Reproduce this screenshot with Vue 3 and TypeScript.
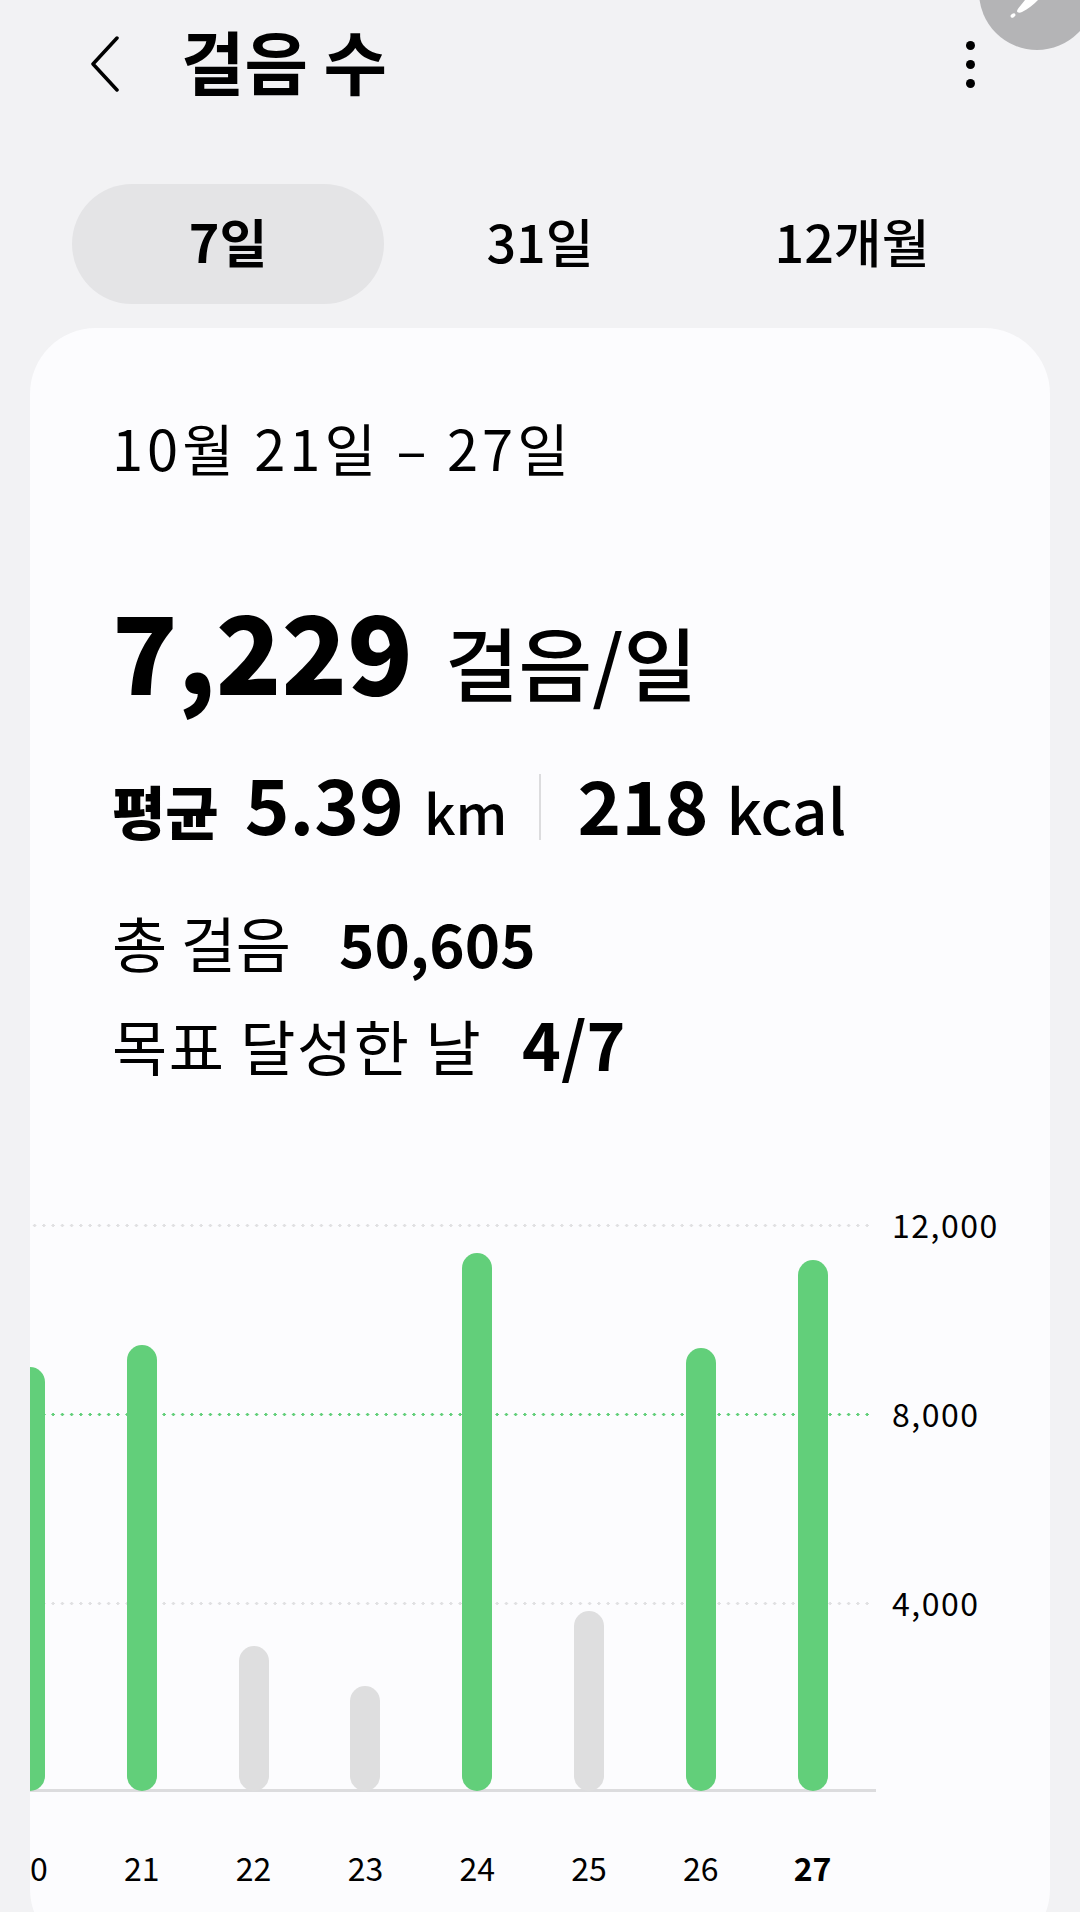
<template>
  <div class="screen">
    <div class="fab">
      <svg width="116" height="58" viewBox="0 0 116 58">
        <path d="M46 0 C43 4 39 8 38 11 C38 13 41 13 43 12 C49 9 55 4 59 0 Z" fill="#fff" />
        <ellipse cx="34" cy="15.5" rx="2.8" ry="1.8" transform="rotate(-35 34 15.5)" fill="#fff" />
      </svg>
    </div>

    <header class="topbar">
      <svg class="back" width="28" height="56" viewBox="0 0 28 56">
        <path d="M26 2 L2 28 L26 54" fill="none" stroke="#000" stroke-width="3.5" stroke-linecap="round" stroke-linejoin="round" />
      </svg>
      <h1 class="title">걸음 수</h1>
      <div class="kebab"><i></i><i></i><i></i></div>
    </header>

    <nav class="tabs">
      <div v-for="t in tabs" :key="t" class="tab" :class="{ active: t === '7일' }">{{ t }}</div>
    </nav>

    <main class="card">
      <div class="range">10월 21일 – 27일</div>

      <div class="avg">
        <span class="avg-num">7,229</span>
        <span class="avg-unit">걸음/일</span>
      </div>

      <div class="stats">
        <span class="stats-label">평균</span>
        <span class="stats-num km-num">5.39</span>
        <span class="stats-unit km">km</span>
        <span class="divider"></span>
        <span class="stats-num">218</span>
        <span class="stats-unit kcal">kcal</span>
      </div>

      <div class="row first">
        <span class="row-label">총 걸음</span>
        <span class="row-value">50,605</span>
      </div>
      <div class="row second">
        <span class="row-label">목표 달성한 날</span>
        <span class="row-value">4/7</span>
      </div>

      <section class="chart">
        <div class="plot">
          <div v-for="g in gridLines" :key="g.label" class="grid-row" :class="{ short: g.label === '4,000' }">
            <span class="dots" :class="{ goal: g.goal }"></span>
            <span class="grid-label">{{ g.label }}</span>
          </div>
          <div class="axis"></div>
          <div class="bars">
            <div v-for="d in days" :key="d.day" class="bar-col">
              <div class="bar" :class="{ hit: d.hit }" :style="{ height: barHeight(d.top) + 'px' }"></div>
            </div>
          </div>
        </div>
        <div class="day-row">
          <span v-for="d in days" :key="d.day" class="day" :class="{ today: d.day === 27 }">{{ d.day }}</span>
        </div>
      </section>
    </main>
  </div>
</template>

<script setup lang="ts">
interface Day {
  day: number
  top: number
  hit: boolean
}

const tabs: string[] = ['7일', '31일', '12개월']

const gridLines = [
  { label: '12,000', goal: false },
  { label: '8,000', goal: true },
  { label: '4,000', goal: false }
]

// top = y of the bar's top edge on the screen
const days: Day[] = [
  { day: 20, top: 1367, hit: true },
  { day: 21, top: 1345, hit: true },
  { day: 22, top: 1646, hit: false },
  { day: 23, top: 1686, hit: false },
  { day: 24, top: 1253, hit: true },
  { day: 25, top: 1611, hit: false },
  { day: 26, top: 1348, hit: true },
  { day: 27, top: 1260, hit: true }
]

const AXIS_Y = 1791

const barHeight = (top: number): number => AXIS_Y - top
</script>

<style>
html,
body {
  margin: 0;
  background: #f2f2f4;
}
</style>

<style scoped>
.screen {
  position: relative;
  width: 1080px;
  height: 1912px;
  overflow: hidden;
  background: #f2f2f4;
  color: #000;
  font-family: "Noto Sans CJK KR", "Noto Sans", sans-serif;
}

.fab {
  position: absolute;
  left: 979px;
  top: -8px;
  width: 116px;
  height: 58px;
  border-radius: 0 0 58px 58px;
  background: #b4b4b6;
}

.fab svg {
  display: block;
  margin-top: 8px;
}

.topbar {
  display: flex;
  align-items: center;
  height: 128px;
  padding-left: 91px;
  box-sizing: border-box;
}

.back {
  flex: none;
}

.title {
  margin: 0 0 8px 62px;
  font-size: 69px;
  line-height: 80px;
  font-weight: 700;
}

.kebab {
  display: flex;
  flex-direction: column;
  gap: 10px;
  margin-left: auto;
  margin-right: 105px;
}

.kebab i {
  display: block;
  width: 9px;
  height: 9px;
  border-radius: 50%;
  background: #000;
}

.tabs {
  display: flex;
  padding: 56px 72px 0;
}

.tab {
  flex: 1;
  height: 120px;
  border-radius: 60px;
  font-size: 52px;
  line-height: 113px;
  font-weight: 500;
  text-align: center;
}

.tab.active {
  background: #e4e4e6;
  font-weight: 700;
}

.card {
  position: relative;
  height: 1627px;
  margin: 24px 30px 0;
  padding-top: 87px;
  box-sizing: border-box;
  overflow: hidden;
  border-radius: 66px;
  background: #fcfcfe;
}

.range {
  padding-left: 82px;
  font-size: 56px;
  line-height: 64px;
  letter-spacing: 4px;
}

.avg {
  display: flex;
  align-items: baseline;
  gap: 32px;
  margin-top: 104px;
  padding-left: 82px;
  line-height: 130px;
}

.avg-num {
  font-size: 108px;
  font-weight: 900;
}

.avg-unit {
  font-size: 80px;
  font-weight: 500;
}

.stats {
  display: flex;
  align-items: baseline;
  margin-top: 32px;
  padding-left: 82px;
  line-height: 90px;
}

.stats-label {
  font-size: 58px;
  font-weight: 900;
  margin-right: 26px;
}

.stats-num {
  font-size: 74px;
  font-weight: 700;
}

.km-num {
  font-size: 76px;
}

.stats-unit {
  margin-left: 20px;
  font-size: 55px;
  font-weight: 500;
}

.kcal {
  margin-left: 18px;
  font-size: 62px;
}

.divider {
  align-self: center;
  width: 2px;
  height: 66px;
  margin: 0 36px 0 32px;
  background: #dcdcde;
}

.row {
  display: flex;
  align-items: baseline;
  gap: 48px;
  padding-left: 82px;
  line-height: 76px;
}

.row.first {
  margin-top: 48px;
}

.row.second {
  margin-top: 24px;
  gap: 40px;
}

.row-label {
  font-size: 60px;
  font-weight: 400;
}

.second .row-label {
  letter-spacing: 1.5px;
}

.row-value {
  font-size: 60px;
  font-weight: 700;
}

.second .row-value {
  font-size: 66px;
}

.chart {
  margin-top: 141px;
}

.grid-row {
  display: flex;
  height: 189px;
}

.grid-row.short {
  height: 187px;
}

.dots {
  width: 839px;
  height: 3px;
  background-image: radial-gradient(circle, #e0e0e2 1.5px, transparent 1.7px);
  background-size: 9.25px 3px;
}

.dots.goal {
  background-image: radial-gradient(circle, #62cf7a 1.5px, transparent 1.7px);
}

.grid-label {
  height: 3px;
  margin-left: 23px;
  font-size: 32px;
  line-height: 1px;
  letter-spacing: 1.5px;
  white-space: nowrap;
}

.plot {
  position: relative;
}

.axis {
  width: 846px;
  height: 3px;
  background: #dcdcde;
}

.bars {
  position: absolute;
  left: -55.9px;
  top: 0;
  display: flex;
  align-items: flex-end;
  height: 567px;
}

.bar-col {
  display: flex;
  justify-content: center;
  width: 111.8px;
}

.bar {
  width: 30px;
  border-radius: 15px;
  background: #dededf;
}

.bar.hit {
  background: #62cf7a;
}

.day-row {
  display: flex;
  width: 894.4px;
  margin: 55px 0 0 -55.9px;
}

.day {
  width: 111.8px;
  font-size: 32px;
  line-height: 40px;
  text-align: center;
}

.day.today {
  font-weight: 700;
}
</style>
